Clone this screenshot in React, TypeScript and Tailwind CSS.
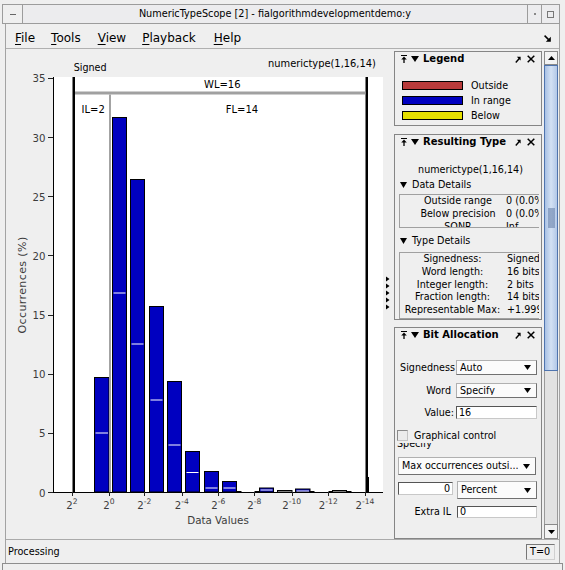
import React from 'react';

// [x0, x1, topY, whiteLineY | null]  (page pixel coordinates)
const BARS: [number, number, number, number | null][] = [
  [94.5, 109, 378.5, 434],
  [112.5, 126.5, 118.5, 294],
  [130.5, 144.5, 180.5, 345],
  [149.5, 163.5, 307.5, 401],
  [167.5, 181.5, 382.5, 446],
  [185.5, 199.5, 452.5, 473.5],
  [204.5, 218.5, 472.5, 489],
  [222.5, 236.5, 482.5, 489],
  [259.5, 273.5, 489, 491],
  [295.5, 310, 490, 492],
];

const EMPTY_BARS: [number, number, number][] = [
  [277.5, 292, 491.5],
  [332.5, 346.5, 491.5],
];

const Y_TICKS = [0, 5, 10, 15, 20, 25, 30, 35];
const X_TICKS: [number, string][] = [
  [72, '2'],
  [109, '0'],
  [144.3, '-2'],
  [181.7, '-4'],
  [218.3, '-6'],
  [254.3, '-8'],
  [291.7, '-10'],
  [328.3, '-12'],
  [365, '-14'],
];

const F = 'DejaVu Sans, sans-serif';

function Plot() {
  const y = (v: number) => 493 - v * 11.83;
  return (
    <svg width="388" height="490" viewBox="6 50 388 490" className="shrink-0 block">
      <rect x="54" y="78" width="329" height="415" fill="#ffffff" />

      {/* bars */}
      {BARS.map(([x0, x1, top, wl], i) => (
        <g key={i}>
          <rect x={x0} y={top} width={x1 - x0} height={493 - top} fill="#0000c0" stroke="#000" strokeWidth="1" />
          {wl !== null && <line x1={x0 + 1} x2={x1 - 1} y1={wl} y2={wl} stroke="#fff" strokeWidth="1" />}
        </g>
      ))}
      {EMPTY_BARS.map(([x0, x1, top], i) => (
        <rect key={i} x={x0} y={top} width={x1 - x0} height={493 - top} fill="#fff" stroke="#000" strokeWidth="1" />
      ))}
      <path d="M236.5 492.5H241.5M254.5 492.5H259.5M310 492.5H314.5M328.5 492.5H332.5M346.5 492.5H351.5" stroke="#000" strokeWidth="1" />

      {/* word length markers */}
      <rect x="72.5" y="78" width="2.5" height="415" fill="#000" />
      <rect x="365.5" y="78" width="2.5" height="415" fill="#000" />
      <rect x="366" y="478" width="3" height="15" fill="#000" />
      <rect x="75" y="92.5" width="290.5" height="3" fill="#a0a0a0" />
      <rect x="109" y="95.5" width="2" height="397.5" fill="#a3a3a3" />

      <text x="73.7" y="71.5" fontSize="9.6" fontFamily={F} fill="#000">Signed</text>
      <text x="268" y="68" fontSize="9.9" fontFamily={F} fill="#000">numerictype(1,16,14)</text>
      <text x="204" y="89" fontSize="10" fontFamily={F} fill="#000">WL=16</text>
      <text x="81.5" y="113.5" fontSize="10" fontFamily={F} fill="#000">IL=2</text>
      <text x="225.7" y="113.5" fontSize="10" fontFamily={F} fill="#000">FL=14</text>

      {/* axes */}
      <line x1="53.5" x2="53.5" y1="78" y2="493.5" stroke="#000" strokeWidth="1" />
      <line x1="53" x2="383" y1="493.5" y2="493.5" stroke="#000" strokeWidth="1" />
      {Y_TICKS.map((v) => (
        <g key={v}>
          <line x1="48" x2="53" y1={Math.round(y(v)) + 0.5} y2={Math.round(y(v)) + 0.5} stroke="#222" strokeWidth="1" />
          <text x="45.5" y={y(v) + 4.5} textAnchor="end" fontSize="10.2" fontFamily={F} fill="#3c3c3c">
            {v}
          </text>
        </g>
      ))}
      {X_TICKS.map(([x, e]) => (
        <g key={e}>
          <line x1={Math.round(x) + 0.5} x2={Math.round(x) + 0.5} y1="493" y2="497" stroke="#222" strokeWidth="1" />
          <text x={x} y="510" textAnchor="middle" fontSize="10.2" fontFamily={F} fill="#3c3c3c">
            2
            <tspan fontSize="7.6" dy="-5">{e}</tspan>
          </text>
        </g>
      ))}
      <text x="218" y="525" textAnchor="middle" fontSize="10.3" fontFamily={F} fill="#3c3c3c">Data Values</text>
      <text
        x="0"
        y="0"
        transform="translate(25.5 286) rotate(-90)"
        textAnchor="middle"
        fontSize="11"
        letterSpacing="0.4"
        fontFamily={F}
        fill="#3c3c3c"
      >
        Occurrences (%)
      </text>

      {/* collapsed-panel arrows */}
      {[280, 287, 294, 301, 308].map((cy) => (
        <path key={cy} d={`M386 ${cy - 2.5}L389.5 ${cy}L386 ${cy + 2.5}Z`} fill="#000" />
      ))}
    </svg>
  );
}

function PinIcon() {
  return (
    <svg width="6" height="8" viewBox="0 0 6 8" className="shrink-0">
      <path d="M0 0.5H6" stroke="#000" strokeWidth="1" />
      <path d="M3 1.6L5.8 4.6H0.2Z" fill="#000" />
      <path d="M3 4V8" stroke="#000" strokeWidth="1.3" />
    </svg>
  );
}

function DownTri({ w = 8, h = 6 }: { w?: number; h?: number }) {
  return (
    <svg width={w} height={h} viewBox={`0 0 ${w} ${h}`} className="shrink-0">
      <path d={`M0 0H${w}L${w / 2} ${h}Z`} fill="#000" />
    </svg>
  );
}

function FloatIcon() {
  return (
    <svg width="6" height="7" viewBox="0 0 6 7" className="shrink-0">
      <path d="M0.8 6.5L4.5 2.2" stroke="#000" strokeWidth="1.4" />
      <path d="M1.8 0.8H5.6V4.6Z" fill="#000" />
    </svg>
  );
}

function CloseIcon() {
  return (
    <svg width="8" height="8" viewBox="0 0 8 8" className="shrink-0">
      <path d="M0.7 0.7L7.3 7.3M7.3 0.7L0.7 7.3" stroke="#000" strokeWidth="1.5" />
    </svg>
  );
}

function DockHeader({ title }: { title: string }) {
  return (
    <div className="h-[13px] pt-[1px] flex items-center pl-[6px] pr-[6px] shrink-0">
      <PinIcon />
      <span className="ml-[4px]">
        <DownTri w={8} h={6} />
      </span>
      <span className="ml-[4px] text-[10px] font-bold leading-[12px] whitespace-nowrap">{title}</span>
      <span className="ml-auto">
        <FloatIcon />
      </span>
      <span className="ml-[6px]">
        <CloseIcon />
      </span>
    </div>
  );
}

function SubHeader({ title }: { title: string }) {
  return (
    <div className="h-[12px] flex items-center pl-[5px] shrink-0">
      <DownTri w={7} h={6} />
      <span className="ml-[5px] text-[9.6px] leading-[12px]">{title}</span>
    </div>
  );
}

function Select({ value, className }: { value: string; className: string }) {
  return (
    <div
      className={`flex items-center bg-[#fbfbfb] border border-[#b0b0b0] border-b-[#707070] border-r-[#707070] pl-[3px] pr-[5px] shrink-0 ${className}`}
    >
      <span className="flex-1 text-[9.6px] leading-none whitespace-nowrap overflow-hidden">{value}</span>
      <DownTri w={7} h={5} />
    </div>
  );
}

function Input({ value, className }: { value: string; className: string }) {
  return (
    <div
      className={`flex items-center bg-white border border-[#555] border-b-[#c8c8c8] border-r-[#c8c8c8] px-[2px] text-[9.6px] leading-none shrink-0 ${className}`}
    >
      {value}
    </div>
  );
}

function LegendRow({ color, label }: { color: string; label: string }) {
  return (
    <div className="h-[15px] flex items-center pl-[7px] shrink-0">
      <div className={`w-[61px] h-[9px] border border-black ${color}`} />
      <span className="ml-[8px] text-[9.6px] leading-none">{label}</span>
    </div>
  );
}

function Dock() {
  return (
    <div className="w-[148px] shrink-0 flex flex-col pt-[2px]">
      {/* Legend */}
      <div className="h-[75px] border border-[#858585] flex flex-col shrink-0">
        <DockHeader title="Legend" />
        <div className="h-[13px] shrink-0" />
        <LegendRow color="bg-[#b83b3b]" label="Outside" />
        <LegendRow color="bg-[#0000c0]" label="In range" />
        <LegendRow color="bg-[#e6e000]" label="Below" />
      </div>

      <div className="h-[8px] shrink-0" />

      {/* Resulting Type */}
      <div className="h-[186px] border border-[#858585] flex flex-col shrink-0 overflow-hidden">
        <DockHeader title="Resulting Type" />
        <div className="mt-[15px] h-[13px] pl-[5px] text-center text-[9.6px] leading-[13px] shrink-0">numerictype(1,16,14)</div>
        <div className="mt-[3px]">
          <SubHeader title="Data Details" />
        </div>
        <div className="mt-[3px] ml-[4px] mr-[2px] h-[34px] border-l border-t border-b border-[#a0a0a0] overflow-hidden shrink-0">
          <div className="grid grid-cols-[104px_1fr] text-[9.6px] leading-[12.8px] whitespace-nowrap">
            <div className="pl-[12px] text-center">Outside range</div>
            <div className="pl-[2px] overflow-hidden">0 (0.0%)</div>
            <div className="pl-[12px] text-center">Below precision</div>
            <div className="pl-[2px] overflow-hidden">0 (0.0%)</div>
            <div className="pl-[12px] text-center">SQNR</div>
            <div className="pl-[2px] overflow-hidden">Inf</div>
          </div>
        </div>
        <div className="mt-[7px]">
          <SubHeader title="Type Details" />
        </div>
        <div className="mt-[4.5px] ml-[4px] mr-[2px] h-[67px] border-l border-t border-b border-[#a0a0a0] overflow-hidden shrink-0 pt-[0.5px]">
          <div className="grid grid-cols-[105px_1fr] text-[9.6px] leading-[12.75px] whitespace-nowrap">
            <div className="text-center">Signedness:</div>
            <div className="pl-[2px] overflow-hidden">Signed</div>
            <div className="text-center">Word length:</div>
            <div className="pl-[2px] overflow-hidden">16 bits</div>
            <div className="text-center">Integer length:</div>
            <div className="pl-[2px] overflow-hidden">2 bits</div>
            <div className="text-center">Fraction length:</div>
            <div className="pl-[2px] overflow-hidden">14 bits</div>
            <div className="text-center">Representable Max:</div>
            <div className="pl-[2px] overflow-hidden">+1.99994</div>
          </div>
        </div>
      </div>

      <div className="h-[7px] shrink-0" />

      {/* Bit Allocation */}
      <div className="flex-1 border border-[#858585] flex flex-col overflow-hidden">
        <DockHeader title="Bit Allocation" />
        <div className="mt-[19px] h-[15px] flex items-center shrink-0">
          <span className="w-[61px] pr-[1px] text-right text-[9.6px] leading-none">Signedness</span>
          <Select value="Auto" className="w-[81px] h-[15px]" />
        </div>
        <div className="mt-[8px] h-[15px] flex items-center shrink-0">
          <span className="w-[61px] pr-[5px] text-right text-[9.6px] leading-none">Word</span>
          <Select value="Specify" className="w-[81px] h-[15px]" />
        </div>
        <div className="mt-[8px] h-[13px] flex items-center shrink-0">
          <span className="w-[61px] pr-[2px] text-right text-[9.6px] leading-none">Value:</span>
          <Input value="16" className="w-[81px] h-[13px]" />
        </div>
        <div className="mt-[11px] h-[11px] flex items-center shrink-0">
          <div className="ml-[2px] w-[11px] h-[11px] bg-[#ebebeb] border border-[#8a8a8a] border-b-[#c4c4c4] border-r-[#c4c4c4]" />
          <span className="ml-[6px] text-[9.6px] leading-none">Graphical control</span>
        </div>
        <div className="mt-[2px] h-[7px] overflow-hidden pl-[2px] shrink-0">
          <div className="mt-[-5px] text-[9.6px] leading-[11px]">Specify</div>
        </div>
        <div className="mt-[7px] flex shrink-0">
          <Select value="Max occurrences outsi..." className="ml-[3px] w-[138px] h-[18px]" />
        </div>
        <div className="mt-[6px] h-[18px] flex items-start shrink-0">
          <Input value="0" className="ml-[3px] mt-[1px] w-[55px] h-[13px] justify-end" />
          <Select value="Percent" className="ml-[4px] w-[80px] h-[18px]" />
        </div>
        <div className="mt-[7px] h-[12px] flex items-center shrink-0">
          <span className="w-[62px] pr-[6px] text-right text-[9.6px] leading-none">Extra IL</span>
          <Input value="0" className="w-[80px] h-[12px]" />
        </div>
      </div>
    </div>
  );
}

function ScrollBar() {
  return (
    <div className="w-[14px] shrink-0 flex flex-col pt-[2px]">
      <div className="h-[14px] border border-[#8a8a8a] bg-[#f3f3f3] flex items-center justify-center shrink-0">
        <svg width="7" height="4" viewBox="0 0 7 4">
          <path d="M0 4H7L3.5 0Z" fill="#000" />
        </svg>
      </div>
      <div className="h-[306px] shrink-0 border border-[#4f74ae] bg-gradient-to-r from-[#a9c1e4] via-[#d3e1f4] to-[#b3c8e7] flex items-center justify-center">
        <div className="w-[7px] h-[20px] bg-[radial-gradient(#6f88b0_0.6px,transparent_0.9px)] bg-[length:2px_2px]" />
      </div>
      <div className="flex-1 border-x border-[#9a9a9a] bg-[#e2e2e2]" />
      <div className="h-[15px] border border-[#8a8a8a] bg-[#f3f3f3] flex items-center justify-center shrink-0">
        <svg width="7" height="4" viewBox="0 0 7 4">
          <path d="M0 0H7L3.5 4Z" fill="#000" />
        </svg>
      </div>
    </div>
  );
}

function MenuItem({ first, rest, className }: { first: string; rest: string; className: string }) {
  return (
    <span className={`text-[12px] leading-none ${className}`}>
      <span className="underline underline-offset-[2px]">{first}</span>
      {rest}
    </span>
  );
}

export default function App() {
  return (
    <div className="w-[565px] h-[570px] overflow-hidden bg-[#efefef] text-black font-['DejaVu_Sans',sans-serif] flex flex-col">
      {/* title bar */}
      <div className="h-[4px] shrink-0" />
      <div className="h-[20px] shrink-0 flex pl-[2px] pr-[5px]">
        <div className="w-[21px] border border-[#9c9c9c] flex items-center justify-center">
          <div className="w-[6px] h-[1px] bg-[#666]" />
        </div>
        <div className="flex-1 border-y border-[#9c9c9c] bg-[#ececee] flex items-center justify-center text-[9.7px] leading-none">
          NumericTypeScope [2] - fialgorithmdevelopmentdemo:y
        </div>
        <div className="w-[15px] border border-[#9c9c9c] bg-[#ececee] flex items-center justify-center">
          <div className="w-[2px] h-[2px] bg-[#888]" />
        </div>
        <div className="w-[18px] border border-l-0 border-[#9c9c9c] bg-[#ececee] flex items-center justify-center">
          <div className="w-[7px] h-[7px] border border-[#777]" />
        </div>
      </div>

      <div className="flex-1 flex flex-col mx-[5px] border-x border-[#a3a3a3]">
        {/* menu bar */}
        <div className="h-[25px] shrink-0 flex items-center pt-[4px] pl-[9px] pr-[8px] border-b border-[#b0b0b0]">
          <MenuItem first="F" rest="ile" className="" />
          <MenuItem first="T" rest="ools" className="ml-[16px]" />
          <MenuItem first="V" rest="iew" className="ml-[17px]" />
          <MenuItem first="P" rest="layback" className="ml-[16px]" />
          <MenuItem first="H" rest="elp" className="ml-[18px]" />
          <svg width="7" height="7" viewBox="0 0 7 7" className="ml-auto">
            <path d="M0.6 0.6L4.6 4.6" stroke="#000" strokeWidth="1.5" />
            <path d="M6.8 1.8V6.8H1.8Z" fill="#000" />
          </svg>
        </div>

        {/* main */}
        <div className="h-[490px] shrink-0 flex">
          <Plot />
          <Dock />
          <div className="w-[2px] shrink-0" />
          <ScrollBar />
        </div>

        {/* status bar */}
        <div className="flex-1 flex items-center border-t border-[#aaaaaa] pl-[2px] pr-[4px]">
          <span className="text-[9.7px] leading-none">Processing</span>
          <div className="ml-auto w-[29px] h-[16px] border border-[#777] border-b-[#d0d0d0] border-r-[#d0d0d0] flex items-center pl-[3px] text-[9.7px] leading-none">
            T=0
          </div>
        </div>
      </div>
      <div className="h-[7px] shrink-0 border-t border-[#8e8e8e] mx-[2px] border-x" />
    </div>
  );
}
